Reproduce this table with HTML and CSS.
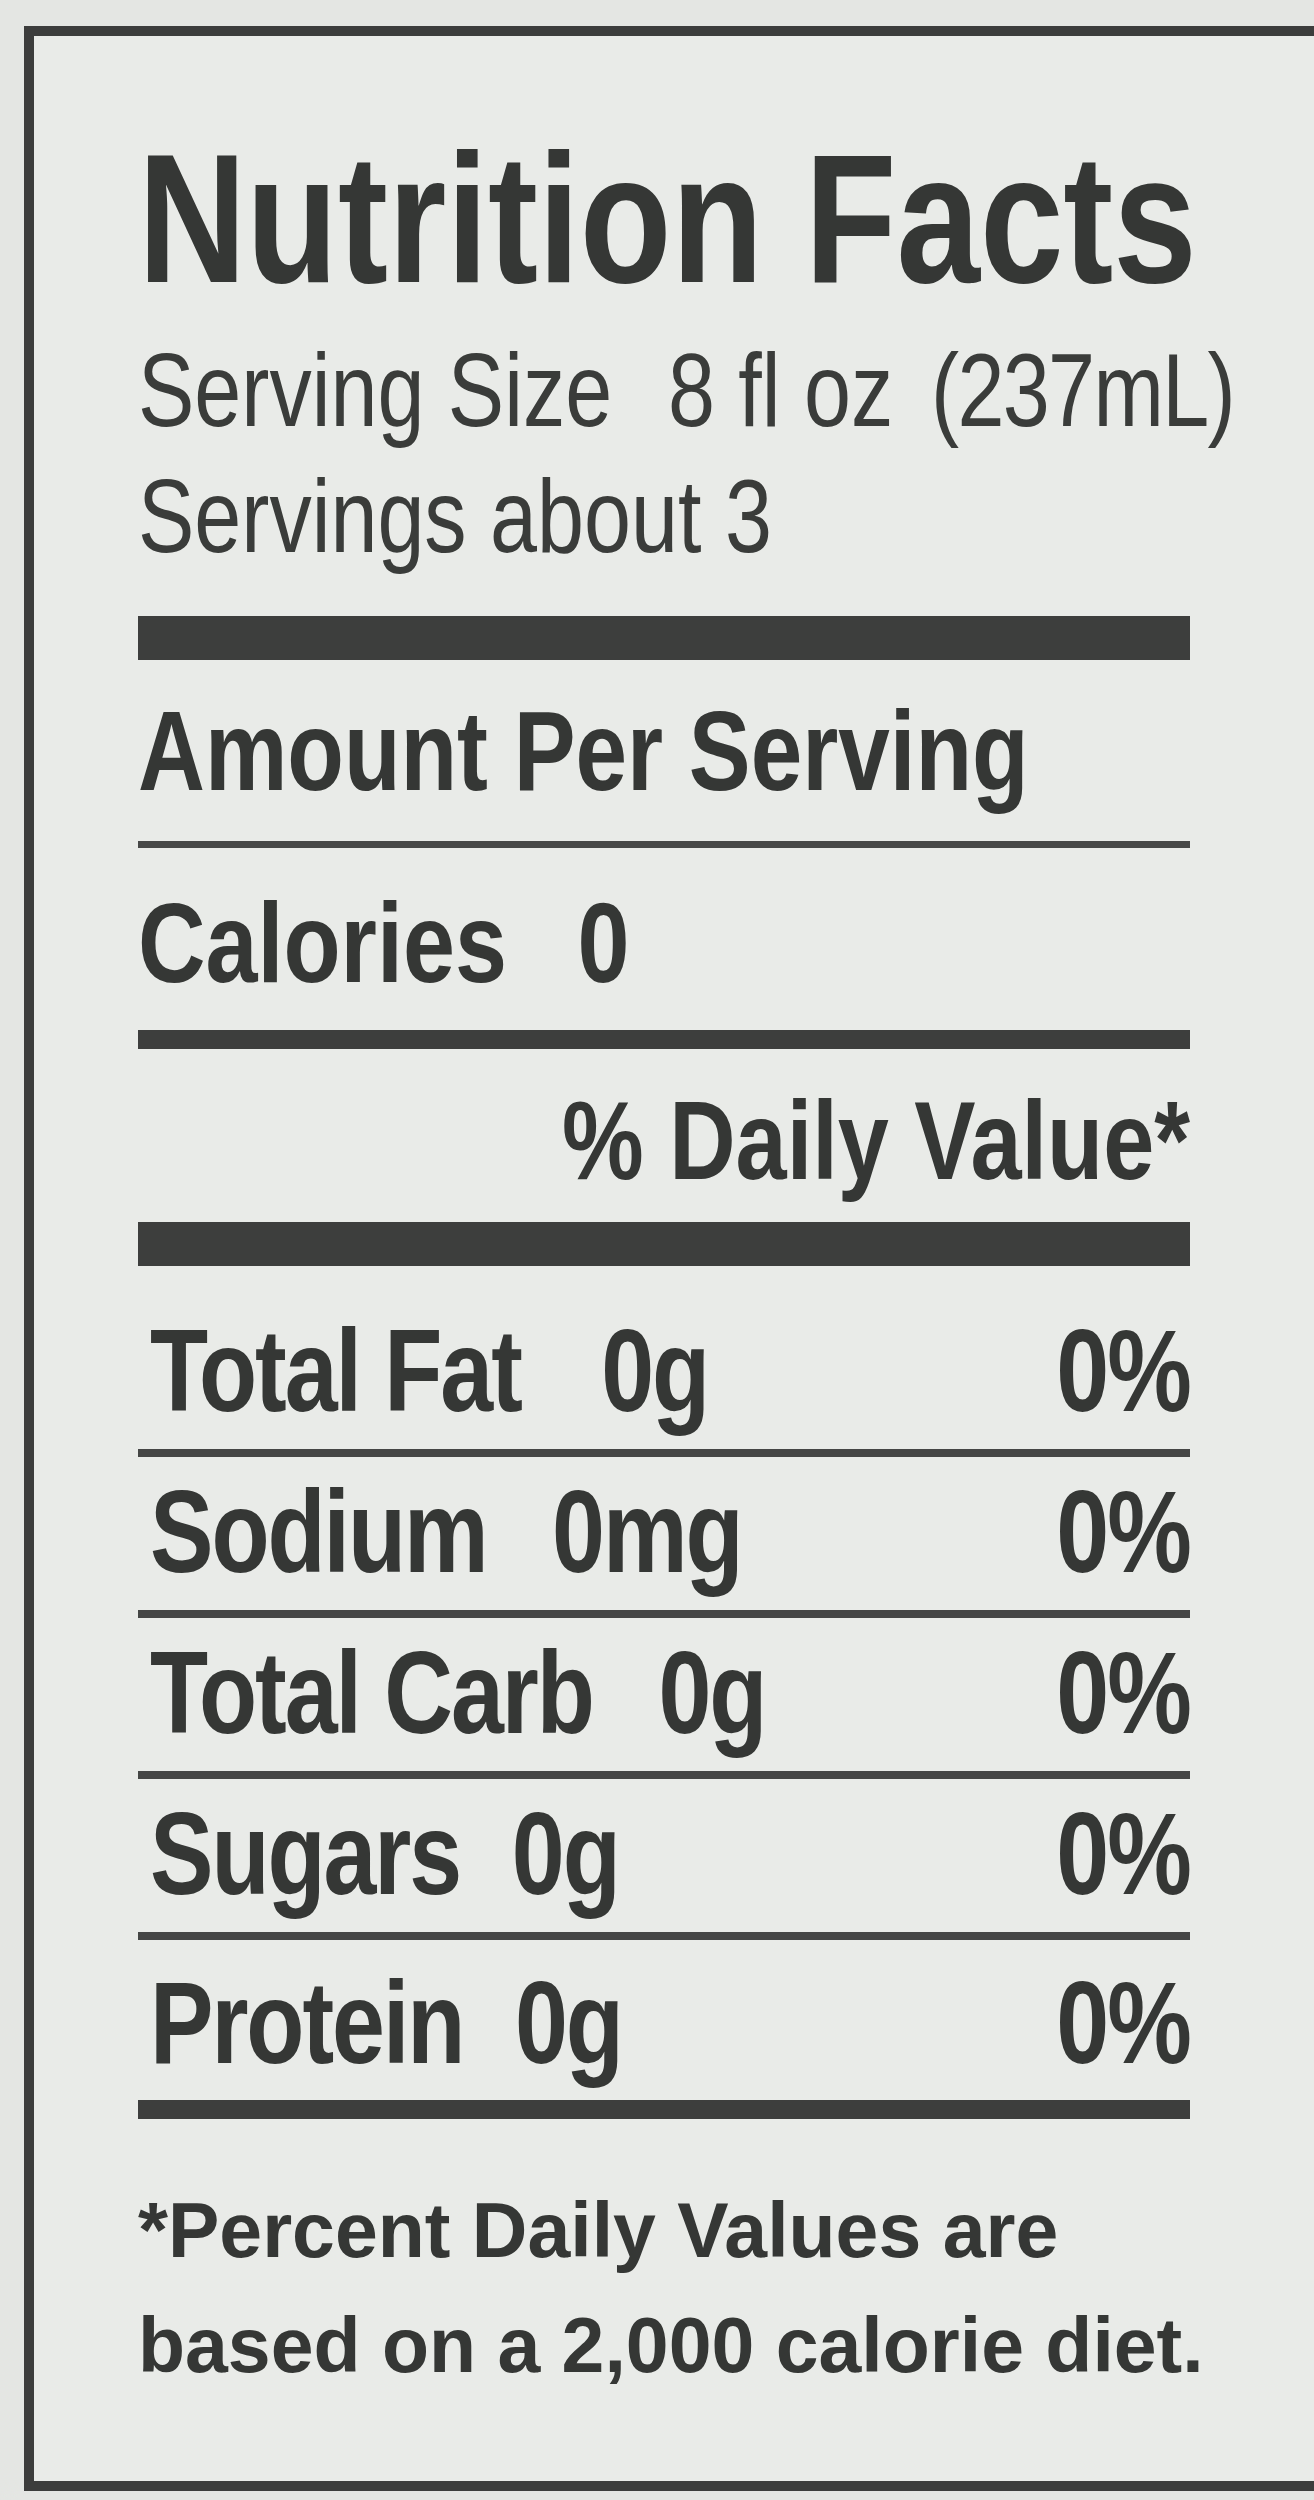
FILE: index.html
```html
<!DOCTYPE html>
<html lang="en">
<head>
<meta charset="utf-8">
<title>Nutrition Facts</title>
<link rel="stylesheet" href="styles.css">
</head>
<body>
<section class="label">
  <div class="panel">
    <h1 class="title">Nutrition Facts</h1>
    <div class="serving">
      <p class="serving-line"><span>Serving Size</span><span class="ss-qty">8 fl oz</span><span class="ss-ml">(237mL)</span></p>
      <p class="serving-line">Servings about 3</p>
    </div>
    <div class="bar bar-thick"></div>
    <p class="amount">Amount Per Serving</p>
    <div class="bar bar-thin"></div>
    <p class="calories">Calories<span class="cal-val">0</span></p>
    <div class="bar bar-medium"></div>
    <p class="dv-head">% Daily Value*</p>
    <div class="bar bar-thick"></div>
    <ul class="nutrients">
      <li class="nutrient"><span class="n-left"><span class="n-name">Total Fat</span><span class="n-amt wide">0g</span></span><span class="n-dv">0%</span></li>
      <li class="nutrient"><span class="n-left"><span class="n-name">Sodium</span><span class="n-amt">0mg</span></span><span class="n-dv">0%</span></li>
      <li class="nutrient"><span class="n-left"><span class="n-name">Total Carb</span><span class="n-amt">0g</span></span><span class="n-dv">0%</span></li>
      <li class="nutrient"><span class="n-left"><span class="n-name">Sugars</span><span class="n-amt tight">0g</span></span><span class="n-dv">0%</span></li>
      <li class="nutrient"><span class="n-left"><span class="n-name">Protein</span><span class="n-amt tight">0g</span></span><span class="n-dv">0%</span></li>
    </ul>
    <div class="bar bar-medium"></div>
    <p class="footnote">*Percent Daily Values are<br>based on a 2,000 calorie diet.</p>
  </div>
</section>
</body>
</html>
```
FILE: styles.css
```css
html, body {
  margin: 0;
  padding: 0;
}

body {
  width: 1314px;
  height: 2500px;
  overflow: hidden;
  background: #e4e6e3;
  color: #353735;
  font-family: "Liberation Sans", Arial, sans-serif;
}

.label {
  box-sizing: border-box;
  height: 2465px;
  margin: 26px 0 0 24px;
  padding-left: 104px;
  border: 10px solid #3c3d3c;
  border-right: none;
  background: #e9ebe8;
}

.panel {
  width: 1052px;
}

/* condensed lettering: the label face is a narrow grotesque */
.title,
.serving-line,
.amount,
.calories {
  transform: scaleX(0.82);
  transform-origin: left center;
}

.title {
  margin: 91px 0 0;
  font-size: 183px;
  line-height: 1;
  font-weight: 700;
  white-space: nowrap;
}

.serving {
  margin-top: 18px;
}

.serving-line {
  margin: 0;
  font-size: 103px;
  line-height: 126px;
  font-weight: 400;
  white-space: nowrap;
  color: #3a3c3a;
}

.ss-qty {
  margin-left: 68px;
}

.ss-ml {
  margin-left: 46px;
  letter-spacing: -2px;
}

.bar {
  background: #3d3e3d;
}

.bar-thick {
  height: 44px;
}

.bar-thin {
  height: 7px;
  margin-top: 33px;
  background: #474847;
}

.bar-medium {
  height: 19px;
}

.serving + .bar-thick {
  margin-top: 36px;
}

.amount {
  margin: 35px 0 0;
  font-size: 113px;
  line-height: 1;
  font-weight: 700;
  white-space: nowrap;
}

.calories {
  margin: 38px 0 0;
  font-size: 114px;
  line-height: 1;
  font-weight: 700;
  white-space: nowrap;
}

.cal-val {
  margin-left: 86px;
}

.calories + .bar-medium {
  margin-top: 30px;
}

.dv-head {
  margin: 36px 0 0;
  font-size: 112px;
  line-height: 1;
  font-weight: 700;
  text-align: right;
  white-space: nowrap;
  transform: scaleX(0.82);
  transform-origin: right center;
}

.dv-head + .bar-thick {
  margin-top: 25px;
}

.nutrients {
  list-style: none;
  margin: 30px 0 0;
  padding: 0;
}

.nutrient {
  display: flex;
  justify-content: space-between;
  padding: 17px 0 20px 12px;
  border-bottom: 8px solid #454645;
  font-size: 116px;
  line-height: 1;
  font-weight: 700;
  letter-spacing: -2.5px;
  white-space: nowrap;
}

.nutrient:last-child {
  padding-top: 25px;
  padding-bottom: 19px;
  border-bottom: none;
}

.n-left {
  display: block;
  transform: scaleX(0.82);
  transform-origin: left center;
}

.n-amt {
  margin-left: 80px;
}

.n-amt.wide {
  margin-left: 98px;
}

.n-amt.tight {
  margin-left: 63px;
}

.n-dv {
  display: block;
  transform: scaleX(0.82);
  transform-origin: right center;
}

.footnote {
  margin: 54px 0 0;
  font-size: 77px;
  line-height: 115px;
  font-weight: 700;
  white-space: nowrap;
}
```
